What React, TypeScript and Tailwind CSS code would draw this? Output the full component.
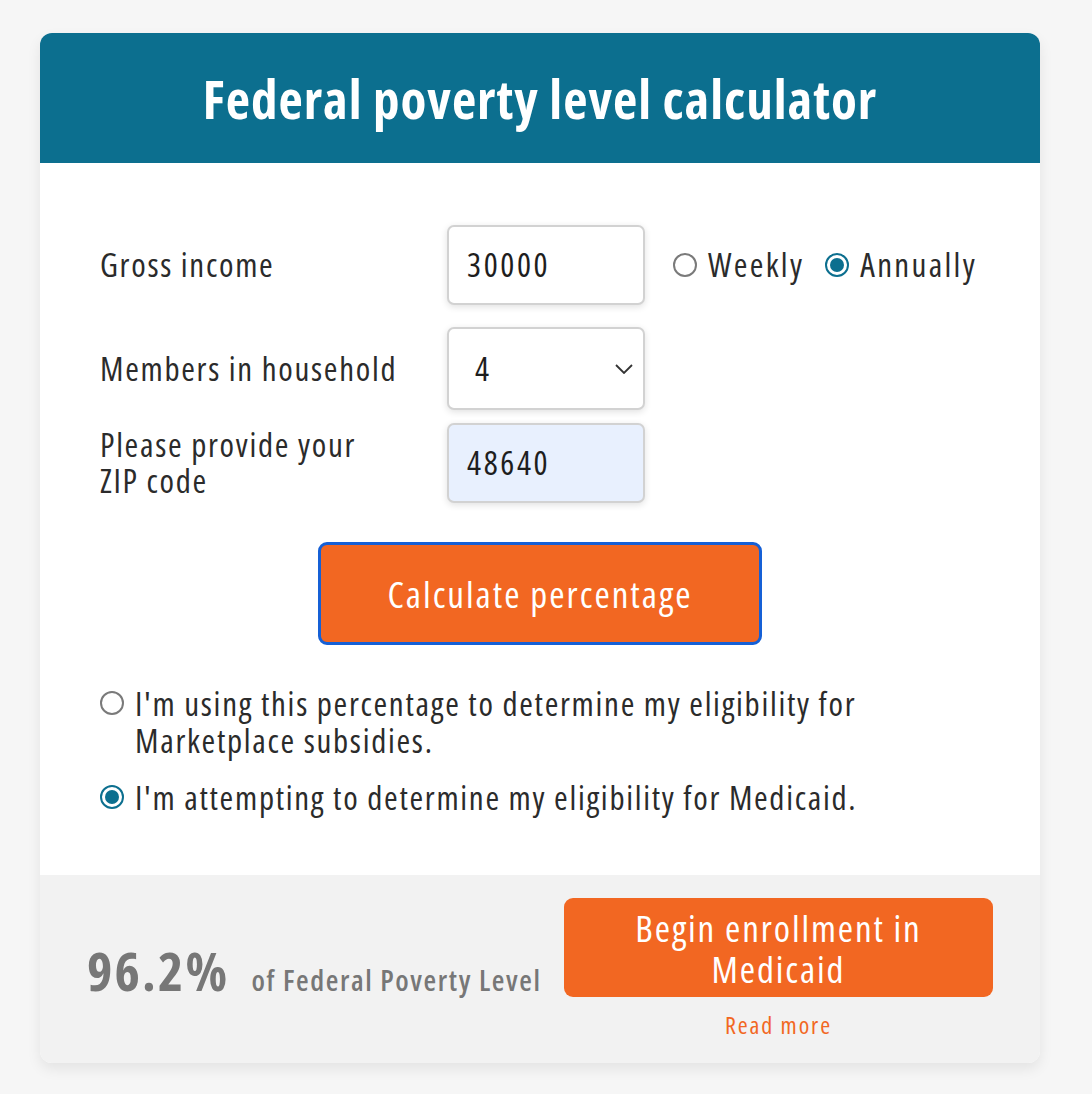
import React from "react";

const FONT = { fontFamily: '"Open Sans", "Noto Sans", sans-serif' };

function Radio({ checked }: { checked?: boolean }) {
  return checked ? (
    <span className="flex h-[24px] w-[24px] shrink-0 items-center justify-center rounded-full border-2 border-[#0c6f8f] bg-white">
      <span className="h-[14px] w-[14px] rounded-full bg-[#0c6f8f]" />
    </span>
  ) : (
    <span className="block h-[24px] w-[24px] shrink-0 rounded-full border-2 border-[#7a7a7a] bg-white" />
  );
}

function Field({
  value,
  tinted,
  select,
  h,
}: {
  value: string;
  tinted?: boolean;
  select?: boolean;
  h: string;
}) {
  return (
    <div
      className={`flex w-[198px] items-center rounded-[7px] border-2 border-[#d2d2d2] shadow-[0_2px_7px_rgba(0,0,0,0.12)] ${h} ${
        tinted ? "bg-[#e8f0fe]" : "bg-white"
      } ${select ? "pl-[26px] pr-[8px]" : "pl-[18px]"}`}
    >
      <span className="flex-1 text-[33px] tracking-[2.6px] text-[#1e1e1e]">{value}</span>
      {select && (
        <svg width="18" height="10" viewBox="0 0 18 10" className="mr-[2px]">
          <polyline points="1,1 9,9 17,1" fill="none" stroke="#333" strokeWidth="1.8" />
        </svg>
      )}
    </div>
  );
}

export default function App() {
  return (
    <div className="min-h-screen bg-[#f6f6f6] px-[40px] pt-[33px] font-stretch-condensed" style={FONT}>
      <div className="w-[1000px] overflow-hidden rounded-[12px] bg-white shadow-[0_6px_14px_rgba(0,0,0,0.08)]">
        <header className="flex h-[130px] items-center justify-center bg-[#0c6f8f]">
          <h1 className="text-[53px] font-bold leading-none tracking-[1px] text-white">
            Federal poverty level calculator
          </h1>
        </header>

        <div className="px-[60px] pb-[59px] pt-[62px] tracking-[1.7px] text-[#2b2b2b]">
          <div className="flex flex-col">
            <div className="flex items-center">
              <label className="w-[347px] text-[33px] leading-[36px]">Gross income</label>
              <Field value="30000" h="h-[80px]" />
              <div className="ml-[28px] flex items-center gap-[11px] text-[33px] tracking-[2.3px]">
                <Radio />
                <span>Weekly</span>
                <span className="ml-[10px]">
                  <Radio checked />
                </span>
                <span>Annually</span>
              </div>
            </div>

            <div className="mt-[22px] flex items-center">
              <label className="w-[347px] text-[33px] leading-[36px]">Members in household</label>
              <Field value="4" select h="h-[83px]" />
            </div>

            <div className="mt-[13px] flex items-center">
              <label className="w-[347px] text-[33px] leading-[36px]">
                Please provide your
                <br />
                ZIP code
              </label>
              <Field value="48640" tinted h="h-[80px]" />
            </div>
          </div>

          <div className="mt-[39px] flex justify-center">
            <button className="h-[103px] w-[444px] rounded-[9px] border-[3px] border-[#1560d6] bg-[#f26722] text-[37px] tracking-[2px] text-white">
              Calculate percentage
            </button>
          </div>

          <div className="mt-[40px] flex flex-col gap-[20px] text-[33px] leading-[37px]">
            <div className="flex items-start gap-[11px]">
              <span className="mt-[6px] shrink-0">
                <Radio />
              </span>
              <span>
                I'm using this percentage to determine my eligibility for
                <br />
                Marketplace subsidies.
              </span>
            </div>
            <div className="flex items-start gap-[11px]">
              <span className="mt-[6px] shrink-0">
                <Radio checked />
              </span>
              <span>I'm attempting to determine my eligibility for Medicaid.</span>
            </div>
          </div>
        </div>

        <footer className="flex h-[188px] items-center justify-between bg-[#f2f2f2] px-[47px] pt-[3px]">
          <div className="flex items-baseline gap-[22px] text-[#777777]">
            <span className="text-[54px] font-bold tracking-[2.2px]">96.2%</span>
            <span className="text-[29px] font-semibold tracking-[1.6px]">of Federal Poverty Level</span>
          </div>
          <div className="flex flex-col items-center">
            <button className="flex h-[99px] w-[429px] items-center justify-center rounded-[9px] bg-[#f26722] text-[37px] leading-[41px] tracking-[1.9px] text-white">
              Begin enrollment in
              <br />
              Medicaid
            </button>
            <span className="mt-[10px] text-[24px] tracking-[1.9px] text-[#f26722]">Read more</span>
          </div>
        </footer>
      </div>
    </div>
  );
}
